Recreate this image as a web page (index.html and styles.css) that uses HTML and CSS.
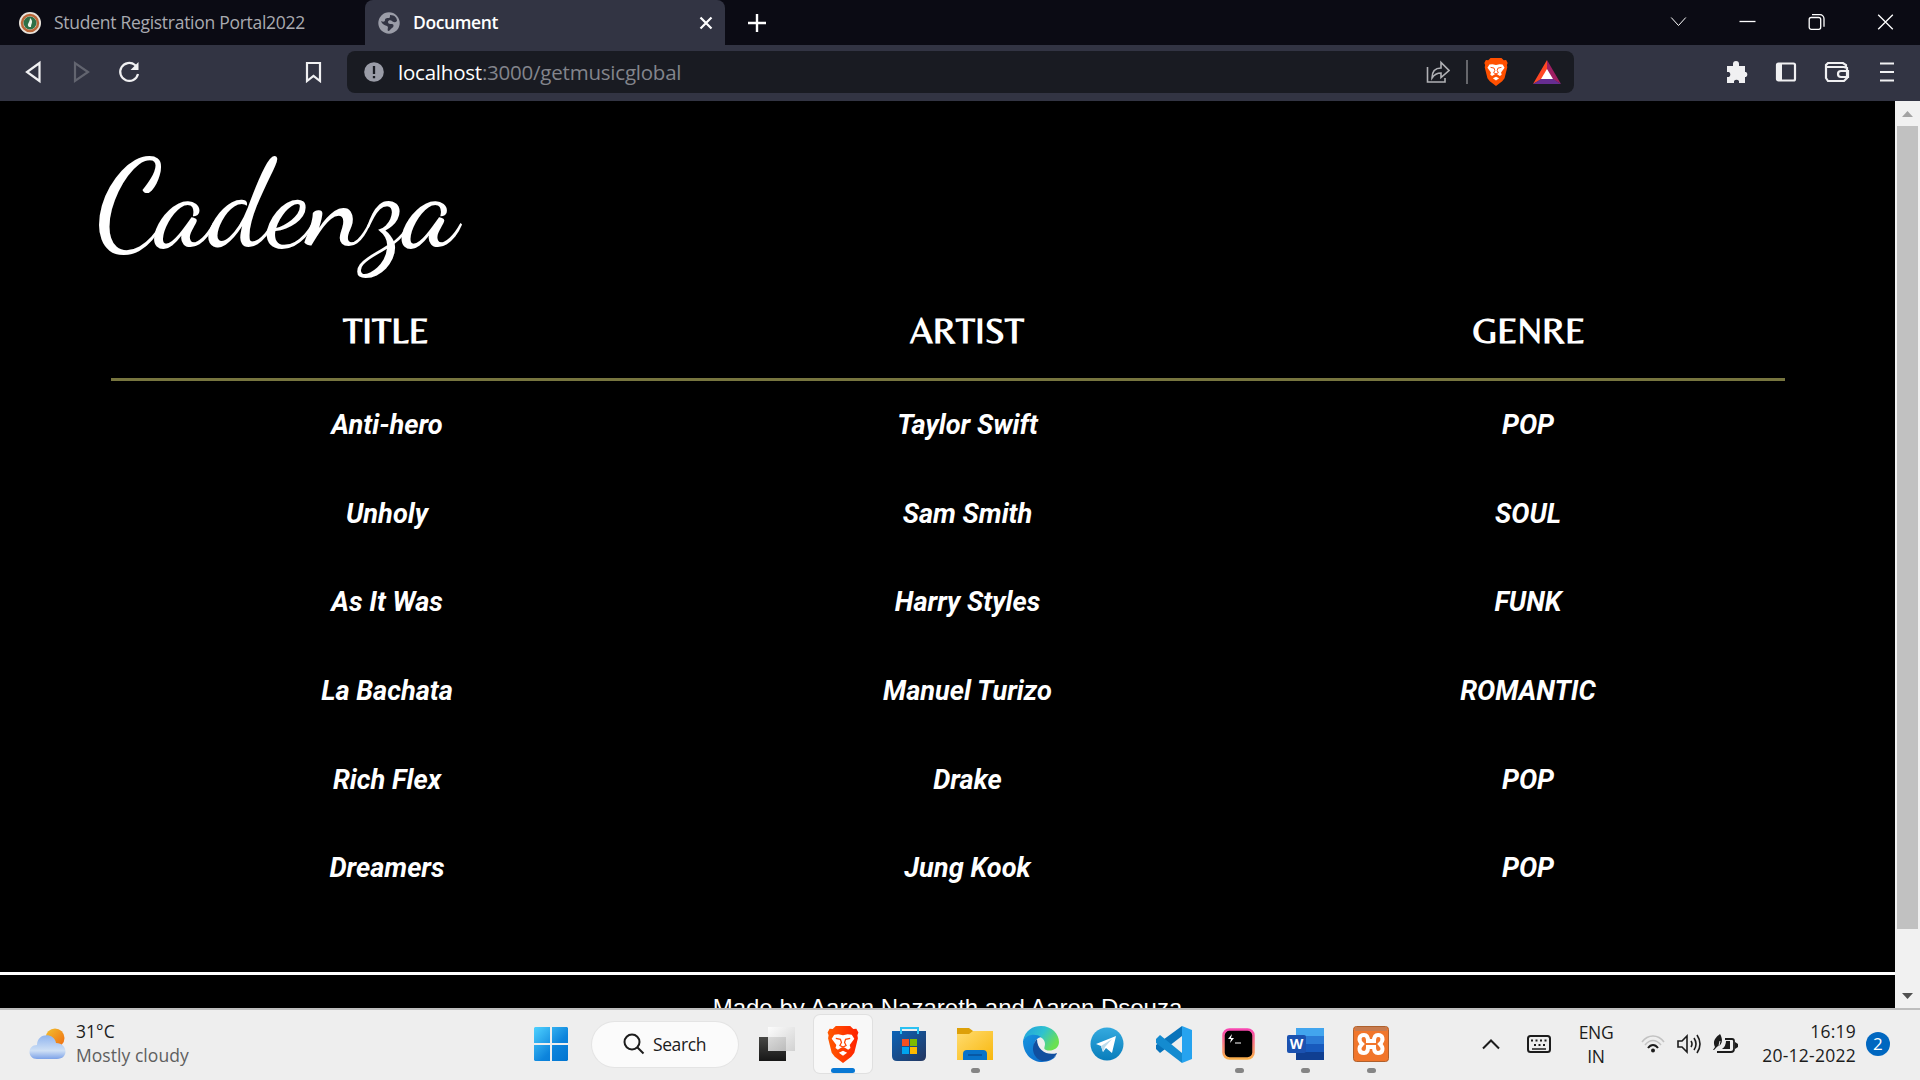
FILE: index.html
```
<!DOCTYPE html>
<html lang="en">
<head>
<meta charset="utf-8">
<title>Document</title>
<link rel="stylesheet" href="styles.css">
</head>
<body>
<svg class="defs" width="0" height="0" aria-hidden="true">
  <defs>
    <linearGradient id="win" x1="0" y1="0" x2="1" y2="1"><stop offset="0" stop-color="#4fd2ff"/><stop offset=".6" stop-color="#0d84dc"/><stop offset="1" stop-color="#0074d0"/></linearGradient>
    <linearGradient id="sun" x1="0" y1="0" x2="1" y2="1"><stop offset="0" stop-color="#f2c230"/><stop offset="1" stop-color="#f0680e"/></linearGradient>
    <linearGradient id="cloud" x1="0" y1="0" x2="0" y2="1"><stop offset="0" stop-color="#8fb4ee"/><stop offset=".65" stop-color="#cfe0f5"/><stop offset="1" stop-color="#7ca2e8"/></linearGradient>
    <linearGradient id="lion" x1="0" y1="0" x2="1" y2="0"><stop offset="0" stop-color="#ff5a00"/><stop offset="1" stop-color="#ff2000"/></linearGradient>
    <linearGradient id="store" x1="0" y1="0" x2="1" y2="1"><stop offset="0" stop-color="#0b63b8"/><stop offset="1" stop-color="#24365f"/></linearGradient>
    <linearGradient id="folder" x1="0" y1="0" x2="1" y2="1"><stop offset="0" stop-color="#ffdc70"/><stop offset="1" stop-color="#f8b70d"/></linearGradient>
    <linearGradient id="edgeTop" x1="0" y1="0" x2="1" y2=".5"><stop offset="0" stop-color="#1f9de0"/><stop offset=".55" stop-color="#2fc2cf"/><stop offset="1" stop-color="#6be052"/></linearGradient>
    <linearGradient id="edgeLow" x1="0" y1="0" x2="1" y2="1"><stop offset="0" stop-color="#1795e0"/><stop offset="1" stop-color="#0a62c4"/></linearGradient>
    <linearGradient id="tele" x1="0" y1="0" x2="0" y2="1"><stop offset="0" stop-color="#34aadf"/><stop offset="1" stop-color="#087dbb"/></linearGradient>
    <linearGradient id="term" x1="0" y1="0" x2="0" y2="1"><stop offset="0" stop-color="#f846b0"/><stop offset="1" stop-color="#f9ae4a"/></linearGradient>
    <linearGradient id="dark" x1="0" y1="0" x2="0" y2="1"><stop offset="0" stop-color="#484846"/><stop offset="1" stop-color="#161616"/></linearGradient>
    <linearGradient id="pane" x1="0" y1="0" x2="1" y2="1"><stop offset="0" stop-color="#fff"/><stop offset="1" stop-color="#ccc"/></linearGradient>
    <symbol id="brave" viewBox="0 0 30 36">
      <path d="M8 0h14l3 3 3-.3 2 3.600-1 2.700.5 3-3.500 14-3 4-8 6-8-6-3-4L.5 12 1 9 0 6.300l2-3.600L5 3z"/>
      <path fill="#fff" d="M15 9l4.500-1 4 .5 2.500 4-4.500 6 .8 3-2.300 1.500-3.500-2h-3l-3.500 2-2.300-1.500.8-3L4 12.500l2.500-4 4-.5zM11 26l4-2 4 2-4 3z"/>
      <path fill="none" stroke="currentColor" stroke-width="1.200" d="M8 12l4.500 1 1 3-1.500 3 3 1.500 3-1.500-1.500-3 1-3 4.500-1M15 20v3"/>
    </symbol>
  </defs>
</svg>

<div class="screen">
  <header class="tabs">
    <div class="tab tab-idle">
      <svg width="22" height="22" viewBox="0 0 22 22"><circle cx="11" cy="11" r="11" fill="#e9e4dc"/><circle cx="11" cy="11" r="8" fill="none" stroke="#b96638" stroke-width="2.500"/><circle cx="11" cy="11" r="6.500" fill="#2e7047"/><path d="M10 15c-3-3 1-4 1-9 4 4 1 5 1 9z" fill="#eef5e8"/></svg>
      <span class="tab-name">Student Registration Portal2022</span>
    </div>
    <div class="tab tab-active">
      <svg width="22" height="22" viewBox="0 0 22 22"><circle cx="11" cy="11" r="10.700" fill="#9b9da8"/><path d="M12 3c5 0 7 3 7 6-2 2-4 1-5 0s-4-1-4 1 2 2 4 2 2 3 0 4-2 3-4 3c-1-2 1-4-1-5-3-1-5-2-6-5 2 1 4 1 4-1s3-2 4-2 1-2 1-3z" fill="#323443"/></svg>
      <span class="tab-name">Document</span>
      <svg class="tab-close" width="14" height="14" viewBox="0 0 14 14"><path d="M1.500 1.500l11 11m0-11l-11 11" stroke="#fff" stroke-width="2.200"/></svg>
    </div>
    <svg class="tab-add" width="18" height="18" viewBox="0 0 18 18"><path d="M9 0v18M0 9h18" stroke="#fff" stroke-width="2.400"/></svg>
    <div class="window-buttons">
      <svg class="thin" width="16" height="16" viewBox="0 0 16 16"><path d="M.7 3.500l7.300 8 7.300-8"/></svg>
      <svg width="16" height="16" viewBox="0 0 16 16"><path d="M0 7.500h16"/></svg>
      <svg width="16" height="16" viewBox="0 0 16 16"><rect x=".7" y="3.500" width="11.500" height="11.800" rx="2"/><path d="M3.500.7h8a4 4 0 0 1 4 4v8"/></svg>
      <svg width="16" height="16" viewBox="0 0 16 16"><path d="M.7.7l14.600 14.600m0-14.600L.7 15.300"/></svg>
    </div>
  </header>

  <nav class="toolbar">
    <div class="nav-buttons">
      <svg width="24" height="24" viewBox="0 0 24 24"><path d="M18.500 3v18L6 12z"/></svg>
      <svg class="is-off" width="24" height="24" viewBox="0 0 24 24"><path d="M6 3v18l13-9z"/></svg>
      <svg width="24" height="24" viewBox="0 0 24 24"><path d="M21 14a9 9 0 1 1-3-9l2 2"/><path class="solid" d="M21.500 2v8h-8z"/></svg>
    </div>
    <svg class="bookmark" width="18" height="22" viewBox="0 0 18 22"><path d="M2 2h13v18l-6.500-5L2 20z"/></svg>
    <div class="address">
      <svg width="20" height="20" viewBox="0 0 20 20"><circle cx="10" cy="10" r="9.800" fill="#9a9ca7"/><path d="M10 4v8M10 14v2.300" stroke="#191b22" stroke-width="2.300"/></svg>
      <span class="url"><b>localhost</b>:3000/getmusicglobal</span>
      <div class="address-tools">
        <svg width="24" height="24" viewBox="0 0 24 24" fill="none" stroke="#b0b1b5" stroke-width="1.600"><path d="M1.500 7v15H19v-4"/><path d="M6 18c0-7 4-10 9-10V2.500l8 8-8 7V13c-4 0-7 2-9 5z"/></svg>
        <i class="divider"></i>
        <svg class="lion" width="24" height="28" fill="#ff5000"><use href="#brave" width="24" height="28"/></svg>
        <svg width="28" height="24" viewBox="0 0 28 24"><path d="M14 0L0 24l14-8z" fill="#ff4724"/><path d="M14 0l14 24-14-8z" fill="#9e1f63"/><path d="M0 24h28l-8-5H8z" fill="#662d91"/><path d="M14 9l-6 10h12z" fill="#fff"/></svg>
      </div>
    </div>
    <div class="toolbar-end">
      <svg width="24" height="24" viewBox="0 0 24 24"><path class="solid" d="M2 6h6V4a3 3 0 0 1 6 0v2h6v6h1a3 3 0 0 1 0 5h-1v6h-6v-2a3 3 0 0 0-5 0v2H2v-6h2a3 3 0 0 0 0-5H2z"/></svg>
      <svg width="24" height="24" viewBox="0 0 24 24"><rect x="2" y="3.500" width="18" height="17" rx="1.500"/><path class="solid" d="M2 4h5v17H2z"/></svg>
      <svg width="26" height="24" viewBox="0 0 26 24"><path d="M22 7V5L19 3H4L2 5v13l2 3h16l3-3V8L20 7H2"/><path d="M24 11h-7a3 3 0 0 0 0 6h7z"/></svg>
      <svg width="16" height="24" viewBox="0 0 16 24"><path d="M1 3.500h14M1 12h14M1 20.500h14"/></svg>
    </div>
  </nav>

  <div class="viewport">
    <main class="page">
      <h1 class="brand">
        <svg width="380" height="181" viewBox="0 0 380 181"><text x="1" y="143" textLength="362" lengthAdjust="spacingAndGlyphs">Cadenza</text></svg>
      </h1>
      <table class="songs">
        <colgroup><col class="col-title"><col class="col-artist"><col class="col-genre"></colgroup>
        <thead><tr><th>TITLE</th><th>ARTIST</th><th>GENRE</th></tr></thead>
        <tbody>
          <tr><td>Anti-hero</td><td>Taylor Swift</td><td>POP</td></tr>
          <tr><td>Unholy</td><td>Sam Smith</td><td>SOUL</td></tr>
          <tr><td>As It Was</td><td>Harry Styles</td><td>FUNK</td></tr>
          <tr><td>La Bachata</td><td>Manuel Turizo</td><td>ROMANTIC</td></tr>
          <tr><td>Rich Flex</td><td>Drake</td><td>POP</td></tr>
          <tr><td>Dreamers</td><td>Jung Kook</td><td>POP</td></tr>
        </tbody>
      </table>
      <footer class="credits">Made by Aaron Nazareth and Aaron Dsouza</footer>
    </main>
    <aside class="scrollbar">
      <svg width="25" height="25" viewBox="0 0 25 25"><path d="M7 16l5.500-6 5.500 6z" fill="#a3a3a3"/></svg>
      <div class="thumb"></div>
      <svg class="arrow-down" width="25" height="25" viewBox="0 0 25 25"><path d="M7 10l5.500 6 5.500-6z" fill="#505050"/></svg>
    </aside>
  </div>

  <footer class="taskbar">
    <div class="weather">
      <svg width="37" height="32" viewBox="0 0 37 32"><circle cx="26" cy="10" r="9.500" fill="url(#sun)"/><path d="M8 31C-2 31-2 17 8 17 8 5 25 4 27 15c12 0 13 16 1 16z" fill="url(#cloud)"/></svg>
      <div class="weather-text"><span>31°C</span><span class="muted">Mostly cloudy</span></div>
    </div>
    <div class="apps">
      <svg class="start" width="36" height="36" viewBox="0 0 36 36"><path fill="url(#win)" d="M2 1h15v16H1V2zM19 1h15l1 1v15H19zM1 19h16v16H2l-1-1zM19 19h16v15l-1 1H19z"/></svg>
      <div class="search"><svg width="22" height="22" viewBox="0 0 22 22" fill="none" stroke="#1c1c1c" stroke-width="2"><circle cx="9" cy="9" r="7.500"/><path d="M14.500 14.500l6 6"/></svg><span>Search</span></div>
      <div class="app"><svg width="36" height="36" viewBox="0 0 36 36"><path fill="url(#dark)" d="M0 11h27v24H0z"/><path fill="url(#pane)" opacity=".85" d="M9 1h27v24H9z"/></svg></div>
      <div class="app app-open"><svg class="lion" width="32" height="37" fill="url(#lion)"><use href="#brave" width="32" height="37"/></svg></div>
      <div class="app"><svg width="36" height="36" viewBox="0 0 36 36"><path fill="url(#store)" d="M1 5h34v25q0 5-5 5H6q-5 0-5-5z"/><path fill="none" stroke="#2bc1f2" stroke-width="2" d="M10 8V2h17v6"/><path fill="#f25022" d="M11 13h7v7h-7z"/><path fill="#7fba00" d="M19 13h7v7h-7z"/><path fill="#00a4ef" d="M11 21h7v7h-7z"/><path fill="#ffb900" d="M19 21h7v7h-7z"/></svg></div>
      <div class="app app-running"><svg width="38" height="36" viewBox="0 0 38 36"><path fill="#dda008" d="M1 2h12l4 3v8H1z"/><path fill="url(#folder)" d="M1 8h12l4-3h20v29H1z"/><path fill="#0873c9" d="M7 34v-6q0-4 4-4h16q4 0 4 4v6z"/><path d="M12 29h14" stroke="#063f80"/></svg></div>
      <div class="app"><svg width="36" height="36" viewBox="0 0 36 36"><path fill="url(#edgeTop)" d="M0 15C2 4 10 0 18 0c11 0 18 8 18 16 0 7-8 10-13 8-3-1-1-3-1-6 0-6-7-9-12-8-5 0-8 2-10 5z"/><path fill="url(#edgeLow)" d="M0 15c3-7 13-8 18-4-8 2-8 10-4 16 5 8 14 5 19 3-2 3-8 6-14 6C9 36 0 28 0 15z"/><path fill="#104f9f" d="M14 13c-9 10-1 23 8 22 7-1 11-5 12-8-9 3-20-2-20-14z"/></svg></div>
      <div class="app"><svg width="34" height="34" viewBox="0 0 34 34"><circle cx="17" cy="17" r="16.500" fill="url(#tele)"/><path fill="#fff" d="M6 17l20-8-4 17-6-5-3 4-2-6z"/><path d="M11 19l11-7-7 8-2 5z" fill="#bcdcec"/></svg></div>
      <div class="app"><svg width="37" height="37" viewBox="0 0 37 37"><path fill="#0873ba" d="M27 0v10L5 27l-4-4v-4z"/><path fill="#148bd0" d="M1 13l4-4 22 18v10L1 17z"/><path fill="#26a3ef" d="M27 0l10 4v29l-10 4z"/></svg></div>
      <div class="app app-running"><svg width="34" height="34" viewBox="0 0 34 34"><rect x="1.500" y="2.500" width="30" height="29" rx="6" fill="#000" stroke="url(#term)" stroke-width="2.500"/><path fill="#fff" d="M10 7l-4 5h3l-1 4 4-5H9z"/><path d="M13 16h6" stroke="#aaa" stroke-width="1.500"/></svg></div>
      <div class="app app-running"><svg width="37" height="34" viewBox="0 0 37 34"><path fill="#42a5ee" d="M9 1h28v8H9z"/><path fill="#2b7bd6" d="M9 9h28v8H9z"/><path fill="#185abd" d="M9 17h28v8H9z"/><path fill="#103f91" d="M9 25h28v8H9z"/><rect y="8" width="19" height="18" rx="2" fill="#1b52b0"/><text class="word-mark" x="9.500" y="22" text-anchor="middle">W</text></svg></div>
      <div class="app app-running"><svg width="36" height="36" viewBox="0 0 36 36"><rect x=".5" y=".5" width="35" height="35" rx="3" fill="#f1762b" stroke="#ae602d"/><path d="M2 3h32" stroke="#c77b4e" stroke-width="4"/><path d="M9 18c-4-4-3-9 2-9 4 0 4 4 4 6h6c0-2 0-6 4-6 5 0 6 5 2 9 4 4 3 9-2 9-4 0-4-4-4-6h-6c0 2 0 6-4 6-5 0-6-5-2-9z" fill="none" stroke="#fff" stroke-width="4"/></svg></div>
    </div>
    <div class="tray">
      <svg class="tray-more" width="18" height="12" viewBox="0 0 18 12"><path d="M1 10.500l8-8 8 8"/></svg>
      <svg class="keyboard" width="24" height="18" viewBox="0 0 24 18"><rect x="1" y="1" width="22" height="16" rx="2.500"/><path d="M4 5.500h16M7 10h12" stroke-dasharray="2 2.500"/><path d="M5 14h14" stroke-width="1.500"/></svg>
      <div class="language"><span>ENG</span><span>IN</span></div>
      <svg class="wifi" width="24" height="20" viewBox="0 0 24 20"><path d="M1 8C7 0 17 0 23 8M4 11c5-6 11-6 16 0" stroke="#c2c2c2" stroke-width="1.600"/><path d="M7 14c3-4 7-4 10 0"/><circle class="ink" cx="12" cy="16.500" r="2"/></svg>
      <svg class="speaker" width="25" height="20" viewBox="0 0 25 20"><path d="M1 7h4l5-5v16l-5-5H1zM14 7q2 3 0 6M17 4q4 6 0 12M20 1q6 9 0 18" stroke-width="1.600"/></svg>
      <svg class="battery" width="25" height="22" viewBox="0 0 25 22"><path d="M12 6h7q2 0 2 2v8q0 3-3 3H4" stroke-width="1.800"/><path class="ink" d="M22 9l3 2v3l-3 2zM2 14C-1 8 3 4 7 1c3 5 3 11-3 13l-3 3H0zM9 16q4-3 4-8h4v8z"/><path d="M3 16q4-3 4-8" stroke="#eee" stroke-width="1"/></svg>
      <div class="clock"><span>16:19</span><span>20-12-2022</span></div>
      <span class="badge">2</span>
    </div>
  </footer>
</div>
</body>
</html>
```
FILE: styles.css
```
* { box-sizing: border-box; }
body { margin: 0; overflow: hidden; background: #000; }
svg { display: block; flex: none; }
.defs { position: absolute; }
.screen {
  display: grid;
  grid-template-rows: 45px 56px 907px 72px;
  width: 1920px;
  height: 1080px;
  font-family: "Segoe UI", "Open Sans", sans-serif;
}

/* Tab strip */
.tabs { display: flex; align-items: center; background: #0b0b14; }
.tab { display: flex; align-items: center; height: 45px; font-size: 17.500px; white-space: nowrap; }
.tab-name { padding-bottom: 2px; }
.tab-idle { width: 365px; padding-left: 19px; gap: 13px; color: #a9aab0; letter-spacing: -.28px; }
.tab-active { width: 360px; padding: 0 12px 0 13px; gap: 13px; border-radius: 8px 8px 0 0; background: #323443; color: #fff; font-weight: 600; letter-spacing: -.4px; }
.tab-close { margin-left: auto; }
.tab-add { margin-left: 23px; }
.window-buttons { display: flex; margin-left: auto; padding-bottom: 2px; }
.window-buttons svg { width: 69px; fill: none; stroke: #fff; stroke-width: 1.300; }
.window-buttons .thin { stroke-width: 1; }

/* Toolbar */
.toolbar { display: flex; align-items: center; padding-bottom: 2px; background: #323443; fill: none; stroke: #f0f0f2; stroke-width: 2.200; }
.nav-buttons { display: flex; gap: 24px; margin-left: 21px; }
.toolbar .solid { fill: #f0f0f2; stroke: none; }
.toolbar .is-off { stroke: #62646f; }
.bookmark { margin-left: 164px; }
.address { display: flex; align-items: center; width: 1227px; height: 42px; margin-left: 24px; padding: 0 13px 0 17px; border-radius: 8px; background: #191b22; stroke: none; }
.url { margin-left: 14px; padding-bottom: 1px; color: #83858c; font-size: 20.500px; letter-spacing: -.22px; }
.url b { color: #fff; font-weight: 400; }
.address-tools { display: flex; align-items: center; margin-left: auto; }
.divider { width: 2px; height: 24px; margin: 0 16px; background: #66676c; }
.lion { color: #ff4300; }
.address-tools .lion { margin-right: 25px; }
.toolbar-end { display: flex; margin-left: auto; margin-right: 8px; }
.toolbar-end svg { width: 50px; }

/* Browser page */
.viewport { display: flex; overflow: hidden; }
.page { flex: 1; height: 907px; overflow: hidden; background: #000; color: #fff; }
.brand { height: 181px; margin: 0; padding-left: 95px; font-weight: 400; }
.brand svg { overflow: visible; }
.brand text { fill: #fff; font: 500 121px "Dancing Script", "Great Vibes", "Brush Script MT", cursive; }
.songs { width: 1674px; margin-left: 111px; border-spacing: 0; table-layout: fixed; text-align: center; }
.col-title { width: 550px; }
.col-artist { width: 612px; }
.col-genre { width: 512px; }
.songs th { height: 99px; padding: 0; border-bottom: 3px solid #77753f; font: 700 36px Belleza, Federo, Lato, sans-serif; }
.songs td { height: 88.600px; padding: 0; font: italic 700 27.200px Roboto, sans-serif; }
.songs td:first-child { padding-left: 2px; }
.songs td:nth-child(2) { padding-left: 1px; }
.songs td:last-child { padding-right: 2px; }
.credits { margin-top: 59.400px; padding-top: 19px; border-top: 3px solid #fff; font: 24px/28px "Liberation Sans", Arial, sans-serif; text-align: center; white-space: nowrap; }
.scrollbar { display: flex; flex-direction: column; width: 25px; background: #f1f1f1; }
.thumb { width: 21px; height: 803px; margin: 0 2px; background: #c1c1c1; }
.arrow-down { margin-top: auto; }

/* Taskbar */
.taskbar { display: flex; align-items: center; padding-bottom: 2px; border-top: 2px solid #bdbdbd; background: #eee; color: #1c1c1c; font-size: 17.500px; line-height: 24px; letter-spacing: .05px; }
.weather { display: flex; align-items: center; width: 533px; padding-left: 29px; gap: 10px; }
.weather-text { display: flex; flex-direction: column; padding-bottom: 2px; }
.muted { color: #5f5f5f; }
.apps { display: flex; align-items: center; width: 871px; }
.search { display: flex; align-items: center; gap: 8px; width: 146px; height: 45px; margin: 0 6px 0 23px; padding-left: 31px; border-radius: 23px; background: #fbfbfb; box-shadow: 0 0 0 1px #e4e4e4; letter-spacing: -.4px; }
.app { display: flex; flex: none; align-items: center; justify-content: center; position: relative; width: 66px; height: 58px; }
.app-open { width: 58px; margin: 0 4px; border-radius: 6px; background: #f8f8f8; box-shadow: 0 0 0 1px #e0e0e0; }
.app-open::after, .app-running::after { content: ""; position: absolute; bottom: 0; left: 50%; width: 24px; height: 5px; margin-left: -12px; border-radius: 3px; background: #0878d4; }
.app-running::after { width: 9px; margin-left: -4px; background: #858585; }
.word-mark { fill: #fff; font: 700 14px "Open Sans", sans-serif; }
.tray { display: flex; align-items: center; flex: 1; }
.tray svg { fill: none; stroke: #1c1c1c; stroke-width: 2; }
.tray .ink { fill: #1c1c1c; stroke: none; }
.tray-more { margin-left: 78px; }
.keyboard { margin-left: 27px; }
.language { display: flex; flex-direction: column; width: 50px; margin-left: 20px; text-align: center; letter-spacing: -.3px; }
.wifi { margin-left: 20px; }
.speaker { margin-left: 12px; }
.battery { margin-left: 11px; }
.clock { display: flex; flex-direction: column; width: 118px; padding-bottom: 2px; text-align: right; letter-spacing: .25px; }
.badge { width: 24px; height: 24px; margin-left: 10px; border-radius: 50%; background: #0067c0; color: #fff; font-size: 17px; line-height: 23px; text-align: center; }
```
